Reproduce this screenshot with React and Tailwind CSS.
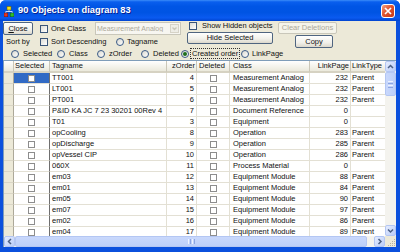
import React from 'react';

const rows = [
  ['TT001', 4, 'Measurement Analog', 232, 'Parent'],
  ['LT001', 5, 'Measurement Analog', 232, 'Parent'],
  ['PT001', 6, 'Measurement Analog', 232, 'Parent'],
  ['P&ID KA JC 7 23 30201 00Rev 4', 7, 'Document Reference', 0, ''],
  ['T01', 3, 'Equipment', 0, ''],
  ['opCooling', 8, 'Operation', 283, 'Parent'],
  ['opDischarge', 9, 'Operation', 285, 'Parent'],
  ['opVessel CIP', 10, 'Operation', 286, 'Parent'],
  ['060X', 11, 'Process Material', 0, ''],
  ['em03', 12, 'Equipment Module', 88, 'Parent'],
  ['em01', 13, 'Equipment Module', 84, 'Parent'],
  ['em05', 14, 'Equipment Module', 90, 'Parent'],
  ['em07', 15, 'Equipment Module', 97, 'Parent'],
  ['em02', 16, 'Equipment Module', 86, 'Parent'],
  ['em04', 17, 'Equipment Module', 89, 'Parent'],
];

// xp style pieces
const btn =
  'flex items-center justify-center rounded-[2px] border border-[#4f6580] bg-[linear-gradient(180deg,#ffffff,#f1f0ea_60%,#dcd8cc)] shrink-0';
const btnOff =
  'flex items-center justify-center rounded-[2px] border border-[#c9c7ba] bg-[#f5f4ea] text-[#aca899] shrink-0';
const cell =
  'shrink-0 h-full flex items-center border-r border-b border-[#e3e0d4] bg-white overflow-hidden whitespace-nowrap';
const head =
  'shrink-0 h-full flex items-center border-r border-r-[#cbc7b8] border-b-2 border-b-[#d6d2c2] bg-[linear-gradient(180deg,#ffffff,#f3f2ea_60%,#ebe9dc)] overflow-hidden whitespace-nowrap';

function FormCheck() {
  return (
    <span className="inline-block w-[8px] h-[8px] shrink-0 border border-[#3a5578] bg-[linear-gradient(135deg,#dcdbd3,#ffffff)]" />
  );
}

function Radio({ checked }) {
  return (
    <span className="w-[8px] h-[8px] shrink-0 rounded-full border border-[#3a5a86] bg-[linear-gradient(135deg,#d9d8d0,#ffffff)] flex items-center justify-center">
      {checked && <span className="w-[4px] h-[4px] rounded-full bg-[#1d6e1d]" />}
    </span>
  );
}

function GridCheck() {
  return <span className="w-[7px] h-[7px] border border-[#8d8d8d] bg-white" />;
}

function Arrow({ dir }) {
  const d = {
    up: 'M2 6 L4.5 3.5 L7 6',
    down: 'M2 3.5 L4.5 6 L7 3.5',
    left: 'M6 2 L3.5 4.5 L6 7',
    right: 'M3.5 2 L6 4.5 L3.5 7',
  }[dir];
  return (
    <div className="w-[11px] h-[11px] shrink-0 rounded-[2px] border border-[#b3c6f3] bg-[linear-gradient(135deg,#e6edfe,#b9ccf9)] flex items-center justify-center">
      <svg width="9" height="9" viewBox="0 0 9 9">
        <path d={d} fill="none" stroke="#4d6185" strokeWidth="1.5" />
      </svg>
    </div>
  );
}

export default function App() {
  return (
    <div className="w-[400px] h-[252px] bg-white font-['Liberation_Sans',Arial,sans-serif] text-[7.5px] leading-none text-[#111]">
      <div className="w-full h-full flex flex-col rounded-t-[6px] overflow-hidden bg-[#0b50dd]">
        {/* title bar */}
        <div className="h-[21px] shrink-0 flex items-center bg-[linear-gradient(180deg,#3b8cf8_0%,#0a5fee_9%,#0055e5_30%,#0054e3_60%,#0a5af0_85%,#0044d0_100%)]">
          <svg className="ml-[4px] mt-[1px]" width="10" height="11" viewBox="0 0 10 11">
            <path d="M5 4 V5.5 M1.8 5.5 H8.2 M1.8 5.5 V7 M8.2 5.5 V7" stroke="#dfe8ff" strokeWidth="0.9" fill="none" />
            <rect x="3" y="0.5" width="4" height="3.5" fill="#f4e21a" stroke="#6b5b00" strokeWidth="0.5" />
            <rect x="0" y="7" width="3.8" height="3.8" fill="#e8321f" stroke="#6e1208" strokeWidth="0.5" />
            <rect x="6.2" y="7" width="3.8" height="3.8" fill="#2fbf2a" stroke="#0f5a0c" strokeWidth="0.5" />
          </svg>
          <span className="ml-[4px] text-white font-bold text-[9.3px] [text-shadow:1px_1px_0_#0a1f8f]">
            90 Objects on diagram 83
          </span>
          <div className="ml-auto mr-[5px] w-[14px] h-[14px] rounded-[3px] border border-white bg-[linear-gradient(135deg,#f3a283,#e1542f_45%,#c4391a)] flex items-center justify-center">
            <svg width="8" height="8" viewBox="0 0 8 8">
              <path d="M1 1 L7 7 M7 1 L1 7" stroke="#ffffff" strokeWidth="1.7" />
            </svg>
          </div>
        </div>

        {/* client area */}
        <div className="flex-1 min-h-0 ml-[3px] mr-[4px] mb-[5px] bg-[#ece9d8] flex flex-col">
          <div className="h-[39px] shrink-0 flex flex-col">
            <div className="h-[27px] flex">
              {/* left block */}
              <div className="w-[184px] shrink-0 flex flex-col">
                <div className="h-[14px] flex items-end">
                  <div className={btn + ' w-[30px] h-[13px]'}>
                    <span>
                      <span className="underline">C</span>lose
                    </span>
                  </div>
                  <div className="ml-[7px] w-[55px] flex items-center h-[13px]">
                    <FormCheck />
                    <span className="ml-[3px]">One Class</span>
                  </div>
                  <div className="w-[86px] h-[13px] flex items-center border border-[#c9c7ba] bg-[#f7f6f1] text-[#aca899]">
                    <span className="ml-[1px] flex-1 whitespace-nowrap overflow-hidden text-[7px]">Measurement Analog</span>
                    <div className="w-[9px] h-[9px] mr-[1px] shrink-0 border border-[#d6d3c7] bg-[#eeede6] flex items-center justify-center">
                      <svg width="7" height="7" viewBox="0 0 7 7">
                        <path d="M1.5 2.5 L3.5 4.5 L5.5 2.5" fill="none" stroke="#c9c7ba" strokeWidth="1.3" />
                      </svg>
                    </div>
                  </div>
                </div>
                <div className="h-[13px] flex items-center">
                  <span className="w-[37px] pl-[3px] shrink-0">Sort by</span>
                  <div className="w-[76px] flex items-center shrink-0">
                    <FormCheck />
                    <span className="ml-[3px]">Sort Descending</span>
                  </div>
                  <div className="flex items-center">
                    <Radio />
                    <span className="ml-[3px]">Tagname</span>
                  </div>
                </div>
              </div>
              {/* middle block */}
              <div className="w-[91px] shrink-0 flex flex-col">
                <div className="h-[10px] flex items-center pl-[2px]">
                  <FormCheck />
                  <span className="ml-[5px] whitespace-nowrap">Show Hidden objects</span>
                </div>
                <div className={btn + ' mt-[1px] w-[86px] h-[12px]'}>Hide Selected</div>
              </div>
              {/* right block */}
              <div className="flex flex-col">
                <div className={btnOff + ' mt-[1px] w-[59px] h-[12px]'}>Clear Deletions</div>
                <div className={btn + ' mt-[1px] ml-[17px] w-[38px] h-[13px]'}>Copy</div>
              </div>
            </div>
            <div className="h-[12px] flex items-center pl-[8px] pb-[1px]">
              <div className="w-[46px] flex items-center shrink-0">
                <Radio />
                <span className="ml-[4px]">Selected</span>
              </div>
              <div className="w-[40px] flex items-center shrink-0">
                <Radio />
                <span className="ml-[4px]">Class</span>
              </div>
              <div className="w-[44px] flex items-center shrink-0">
                <Radio />
                <span className="ml-[4px]">zOrder</span>
              </div>
              <div className="w-[40px] flex items-center shrink-0">
                <Radio />
                <span className="ml-[4px]">Deleted</span>
              </div>
              <div className="w-[60px] flex items-center shrink-0">
                <Radio checked />
                <span className="ml-[2px] px-[1px] py-[1px] outline outline-1 outline-dotted outline-[#333]">Created order</span>
              </div>
              <div className="flex items-center shrink-0">
                <Radio />
                <span className="ml-[3px]">LinkPage</span>
              </div>
            </div>
          </div>

          {/* grid */}
          <div className="flex-1 min-h-0 flex flex-col border-t border-l border-[#7f9db9]">
            <div className="flex-1 min-h-0 flex">
              <div className="w-[381px] shrink-0 flex flex-col overflow-hidden">
                <div className="h-[12px] shrink-0 flex">
                  <div className={head + ' w-[10px] border-r-[#aca899]'} />
                  <div className={head + ' w-[36px] pl-[1px]'}>Selected</div>
                  <div className={head + ' w-[117px] pl-[2px]'}>Tagname</div>
                  <div className={head + ' w-[30px] justify-end pr-[1px]'}>zOrder</div>
                  <div className={head + ' w-[33px] pl-[2px]'}>Deleted</div>
                  <div className={head + ' w-[80px] pl-[3px]'}>Class</div>
                  <div className={head + ' w-[41px] justify-end pr-[1px]'}>LinkPage</div>
                  <div className={head + ' w-[45px] pl-[1px]'}>LinkType</div>
                </div>
                {rows.map((r, i) => (
                  <div key={i} className="h-[11px] shrink-0 flex">
                    <div className="w-[10px] shrink-0 h-full bg-[#ece9d8] border-r border-b border-r-[#aca899] border-b-[#d9d5c5]" />
                    <div
                      className={
                        i === 0
                          ? 'w-[36px] shrink-0 h-full flex items-center justify-center bg-[#316ac5] border-r border-r-[#6f6f6f] border-b border-b-[#e3e0d4]'
                          : 'w-[36px] shrink-0 h-full flex items-center justify-center bg-white border-r border-r-[#6f6f6f] border-b border-b-[#e3e0d4]'
                      }
                    >
                      <GridCheck />
                    </div>
                    <div className={cell + ' w-[117px] pl-[2px]'}>{r[0]}</div>
                    <div className={cell + ' w-[30px] justify-end pr-[2px]'}>{r[1]}</div>
                    <div className={cell + ' w-[33px] justify-center'}>
                      <GridCheck />
                    </div>
                    <div className={cell + ' w-[80px] pl-[3px]'}>{r[2]}</div>
                    <div className={cell + ' w-[41px] justify-end pr-[2px]'}>{r[3]}</div>
                    <div className={cell + ' w-[45px] pl-[1px]'}>{r[4]}</div>
                  </div>
                ))}
              </div>
              {/* vertical scrollbar */}
              <div className="w-[11px] shrink-0 flex flex-col bg-[#f4f3ee]">
                <Arrow dir="up" />
                <div className="h-[24px] shrink-0 rounded-[2px] border border-[#b3c6f3] bg-[linear-gradient(90deg,#c9d8fc,#bccff9)] flex flex-col items-center justify-center gap-[1px]">
                  <span className="w-[5px] h-px bg-[#eef3ff]" />
                  <span className="w-[5px] h-px bg-[#8ca5e2]" />
                  <span className="w-[5px] h-px bg-[#eef3ff]" />
                  <span className="w-[5px] h-px bg-[#8ca5e2]" />
                </div>
                <div className="flex-1" />
                <Arrow dir="down" />
              </div>
            </div>
            {/* horizontal scrollbar */}
            <div className="h-[11px] shrink-0 flex bg-[#f4f3ee]">
              <Arrow dir="left" />
              <div className="flex-1 flex">
                <div className="w-[352px] h-full rounded-[2px] border border-[#b3c6f3] bg-[linear-gradient(180deg,#c9d8fc,#bccff9)] flex items-center justify-center gap-[1px]">
                  <span className="w-px h-[5px] bg-[#eef3ff]" />
                  <span className="w-px h-[5px] bg-[#8ca5e2]" />
                  <span className="w-px h-[5px] bg-[#eef3ff]" />
                  <span className="w-px h-[5px] bg-[#8ca5e2]" />
                </div>
              </div>
              <Arrow dir="right" />
              <div className="w-[11px] h-full shrink-0 bg-[#ece9d8] flex items-end justify-end">
                <svg width="9" height="9" viewBox="0 0 9 9">
                  <g fill="#b5b2a3">
                    <rect x="7" y="1" width="1" height="1" />
                    <rect x="5" y="3" width="1" height="1" />
                    <rect x="7" y="3" width="1" height="1" />
                    <rect x="3" y="5" width="1" height="1" />
                    <rect x="5" y="5" width="1" height="1" />
                    <rect x="7" y="5" width="1" height="1" />
                    <rect x="1" y="7" width="1" height="1" />
                    <rect x="3" y="7" width="1" height="1" />
                    <rect x="5" y="7" width="1" height="1" />
                    <rect x="7" y="7" width="1" height="1" />
                  </g>
                </svg>
              </div>
            </div>
          </div>
        </div>
      </div>
    </div>
  );
}
